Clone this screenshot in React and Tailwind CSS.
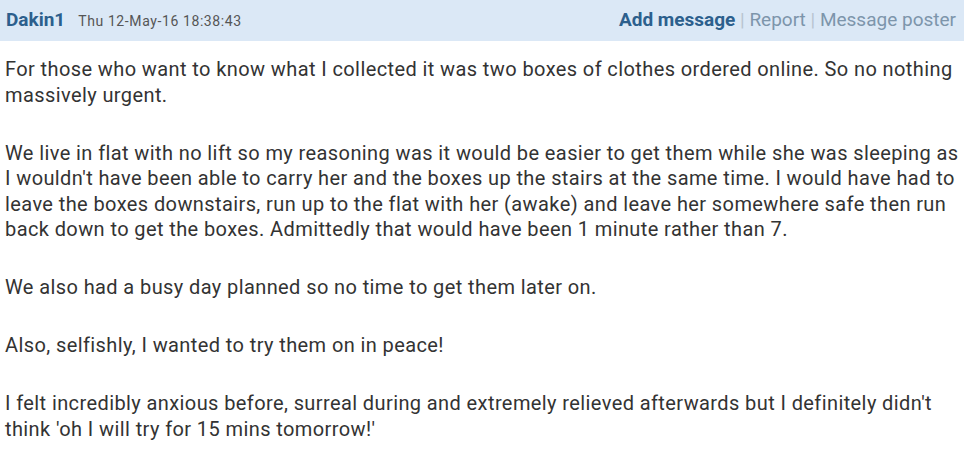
import React from 'react'

const paragraphs = [
    "For those who want to know what I collected it was two boxes of clothes ordered online. So no nothing massively urgent.",
    "We live in flat with no lift so my reasoning was it would be easier to get them while she was sleeping as I wouldn't have been able to carry her and the boxes up the stairs at the same time. I would have had to leave the boxes downstairs, run up to the flat with her (awake) and leave her somewhere safe then run back down to get the boxes. Admittedly that would have been 1 minute rather than 7.",
    "We also had a busy day planned so no time to get them later on.",
    "Also, selfishly, I wanted to try them on in peace!",
    "I felt incredibly anxious before, surreal during and extremely relieved afterwards but I definitely didn't think 'oh I will try for 15 mins tomorrow!'",
]

export default function App() {
    return (
        <div className="w-[970px] h-[469px] bg-white overflow-hidden font-['Roboto',sans-serif]">
            <div className="w-[964px] h-[41px] bg-[#dbe8f6] flex items-center justify-between pl-[6px] pr-[8px]">
                <div className="flex items-baseline gap-[13px]">
                    <span className="text-[19px] font-bold text-[#2c5f8d]">Dakin1</span>
                    <span className="text-[14px] tracking-[0.6px] text-[#555]">Thu 12-May-16 18:38:43</span>
                </div>
                <div className="text-[19px] text-[#7d95ab]">
                    <span className="font-bold text-[#2c5f8d]">Add message</span>
                    <span className="text-[#b8c4d0]"> | </span>
                    <span>Report</span>
                    <span className="text-[#b8c4d0]"> | </span>
                    <span>Message poster</span>
                </div>
            </div>
            <div className="w-[962px] pl-[5px] pt-[16px] text-[20px] tracking-[0.4px] leading-[25.5px] text-[#333]">
                {paragraphs.map((p, i) => (
                    <p key={i} className="mb-[32.5px]">{p}</p>
                ))}
            </div>
        </div>
    )
}
